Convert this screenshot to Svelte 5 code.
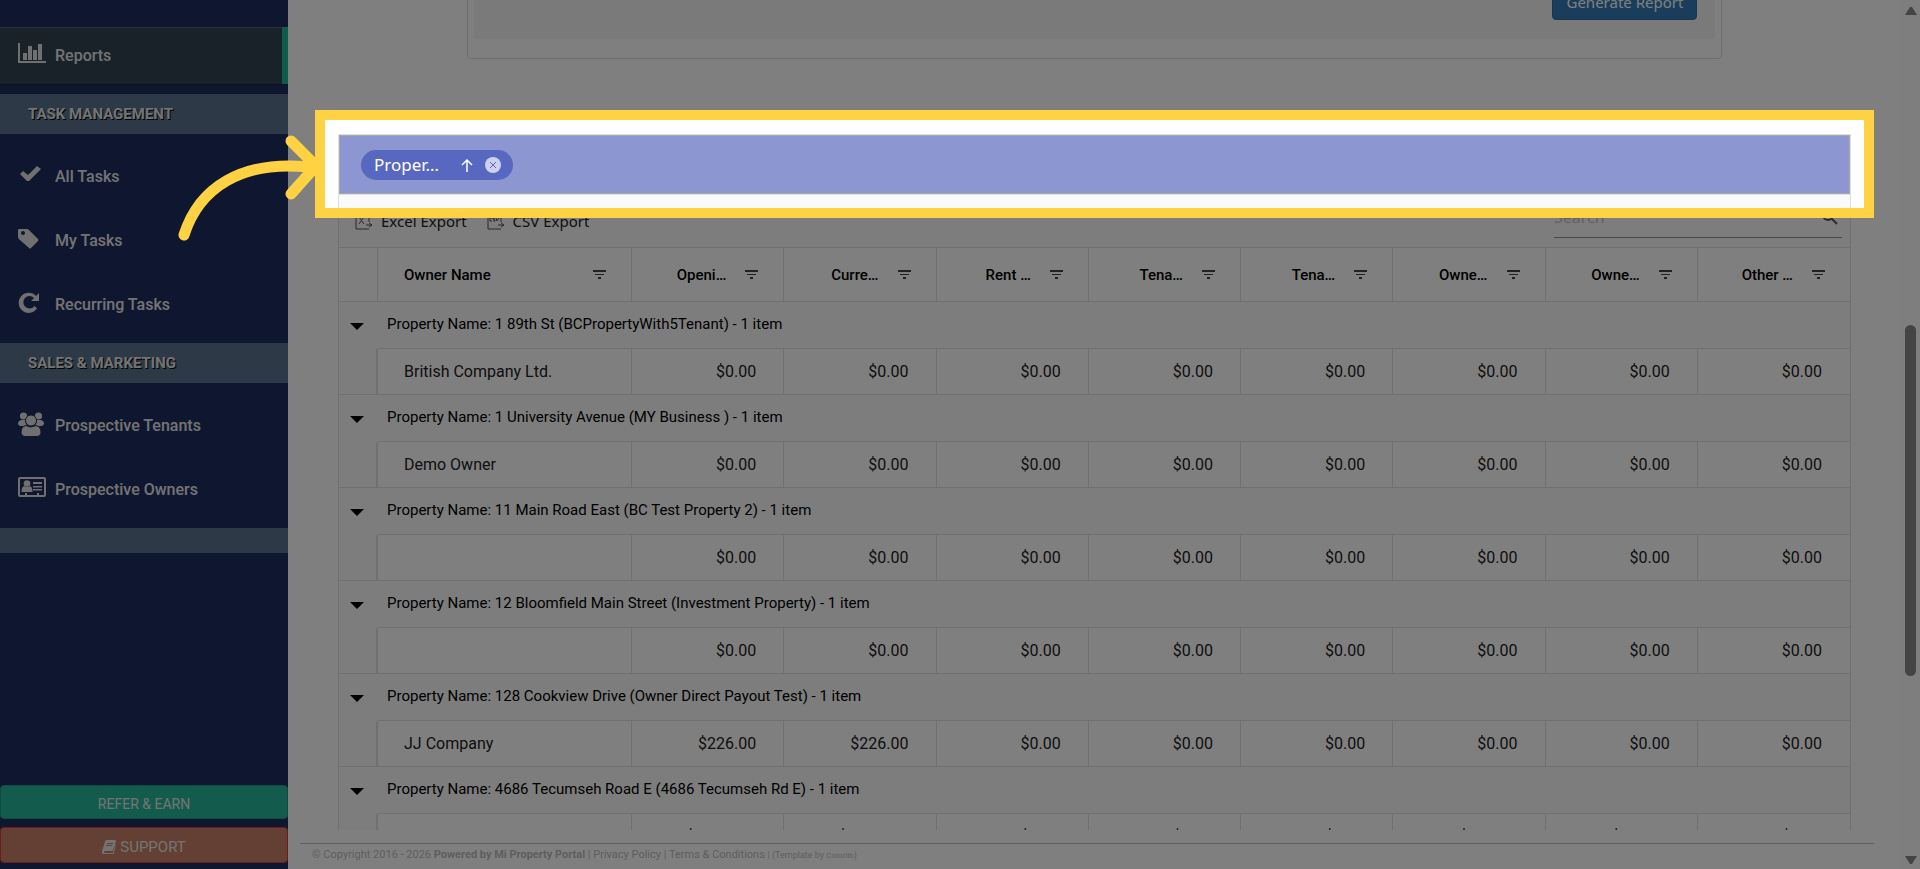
<script lang="ts">
  const tasks = [
    { label: 'All Tasks', icon: 'check' },
    { label: 'My Tasks', icon: 'tag' },
    { label: 'Recurring Tasks', icon: 'repeat' }
  ];
  const sales = [
    { label: 'Prospective Tenants', icon: 'group' },
    { label: 'Prospective Owners', icon: 'card' }
  ];
  const sections = [
    { title: 'Task Management', items: tasks },
    { title: 'Sales & Marketing', items: sales }
  ];

  const columns = ['Openi…', 'Curre…', 'Rent …', 'Tena…', 'Tena…', 'Owne…', 'Owne…', 'Other …'];
  const zero = '$0.00';
  const zeros = Array(8).fill(zero);

  const groups = [
    { name: '1 89th St (BCPropertyWith5Tenant)', owner: 'British Company Ltd.', values: zeros },
    { name: '1 University Avenue (MY Business )', owner: 'Demo Owner', values: zeros },
    { name: '11 Main Road East (BC Test Property 2)', owner: '', values: zeros },
    { name: '12 Bloomfield Main Street (Investment Property)', owner: '', values: zeros },
    { name: '128 Cookview Drive (Owner Direct Payout Test)', owner: 'JJ Company', values: ['$226.00', '$226.00', ...Array(6).fill(zero)] },
    { name: '4686 Tecumseh Road E (4686 Tecumseh Rd E)', owner: '', values: ['$1,226.00', '$1,226.00', zero, zero, zero, '$226.00', '$226.00', zero] }
  ];
</script>

{#snippet navIcon(name: string)}
  <svg class="nav-icon" viewBox="0 0 28 24" aria-hidden="true">
    {#if name === 'chart'}
      <path d="M0 1h2v18h26v2H0z M5 11h4v7H5z M10 4h4v14h-4z M15 8h4v10h-4z M20 2h4v16h-4z" />
    {:else if name === 'check'}
      <path d="M2 11l3-3 5 4 9-9 4 3-12 12h-2z" />
    {:else if name === 'tag'}
      <path fill-rule="evenodd" d="M1 2h8q1 0 2 1l9 9q1 1 0 2l-7 7q-1 1-2 0L2 13q-2-1-2-3V3q0-1 1-1z M5 4a2 2 0 1 0 0 4a2 2 0 1 0 0-4z" />
    {:else if name === 'repeat'}
      <path d="M18 5l3-3v8h-8l3-3a6.200 6.200 0 1 0 .500 8l2.500 2.500A10 10 0 1 1 18 5z" />
    {:else if name === 'group'}
      <circle cx="5.500" cy="4" r="3.600" />
      <circle cx="20.500" cy="4" r="3.600" />
      <path d="M3 8h4q0 4 3 6H3q-3 0-3-3 0-2 3-3z M23 8h-4q0 4-3 6h7q3 0 3-3 0-2-3-3z" />
      <g class="front">
        <circle cx="13" cy="8.500" r="5.500" />
        <path d="M8 13.500q5 3 10 0 5 1 5 7 0 4-4 4H7q-4 0-4-4 0-6 5-7z" />
      </g>
    {:else}
      <path fill-rule="evenodd" d="M2 1h24q2 0 2 2v16q0 2-2 2H2q-2 0-2-2V3q0-2 2-2z M2 3v16h5v-2h2v2h10v-2h2v2h5V3z" />
      <circle cx="9" cy="7.500" r="3.300" />
      <path d="M6 10q3 2 6 0 2.500 1 2.500 6h-11q0-5 2.500-6z M15 6h9v2h-9z M15 10h9v1.500h-9z M15 13h9v1.500h-9z" />
    {/if}
  </svg>
{/snippet}

{#snippet filterIcon()}
  <button class="filter" aria-label="Filter">
    <svg width="13" height="10" viewBox="0 0 13 10"><path d="M0 0h13v2H0z M2 4h9v1H2z M5 7h3v2H5z" /></svg>
  </button>
{/snippet}

<div class="shell">
  <nav class="sidebar">
    <a class="item active" href="#reports">{@render navIcon('chart')}Reports</a>
    {#each sections as section}
      <h3>{section.title}</h3>
      <div class="menu">
        {#each section.items as item}
          <a class="item" href="#menu">{@render navIcon(item.icon)}{item.label}</a>
        {/each}
      </div>
    {/each}
    <div class="band"></div>
    <div class="actions">
      <button class="refer">REFER &amp; EARN</button>
      <button class="support">
        <svg width="14" height="14" viewBox="0 0 14 14" aria-hidden="true">
          <path fill-rule="evenodd" d="M5 0h8q1 0 1 1l-3 9q0 1-1 1H3q-1 0-1 1t1 1h8l2-8 1-1-2 9q0 1-1 1H2q-3 0-2-3L3 2q0-2 2-2z M5 3v1h6V3z M4 5v1h6V5z" />
        </svg>
        SUPPORT
      </button>
    </div>
  </nav>

  <main>
    <section class="criteria">
      <div class="panel">
        <div class="well">
          <button class="generate">Generate Report</button>
        </div>
      </div>
    </section>

    <section class="report">
      <div class="grid">
        <div class="group-area">
          <div class="chip">
            <span>Proper…</span>
            <svg width="12" height="14" viewBox="0 0 12 14" aria-hidden="true"><path d="M6 14V2M1 7l5-5 5 5" /></svg>
            <button aria-label="Ungroup">
              <svg width="16" height="16" viewBox="0 0 16 16"><circle cx="8" cy="8" r="8" /><path d="M5 5l6 6M11 5l-6 6" /></svg>
            </button>
          </div>
        </div>
        <div class="toolbar">
          <button>
            <svg width="18" height="18" viewBox="0 0 18 18" aria-hidden="true"><path d="M14 10V1H1v16h13M11 13h6M14 11l3 2-3 2M4 5l5 7M9 5l-5 7" /></svg>
            Excel Export
          </button>
          <button>
            <svg width="18" height="18" viewBox="0 0 18 18" aria-hidden="true"><path d="M14 10V1H1v16h13M11 13h6M14 11l3 2-3 2M5 6H3v3h2M8 6H6v1l2 1v1H6M9 6l1 3 2-3" /></svg>
            CSV Export
          </button>
          <div class="search">
            <input type="text" placeholder="Search" aria-label="Search" />
            <svg width="16" height="16" viewBox="0 0 16 16" aria-hidden="true"><circle cx="6" cy="6" r="5" /><path d="M10 10l5 5" /></svg>
          </div>
        </div>
        <table>
          <colgroup>
            <col class="indent" />
            <col class="owner" />
            {#each columns as _}<col />{/each}
          </colgroup>
          <thead>
            <tr>
              <th aria-label="Group"></th>
              <th><div class="head first"><span>Owner Name</span>{@render filterIcon()}</div></th>
              {#each columns as column}
                <th><div class="head"><span>{column}</span>{@render filterIcon()}</div></th>
              {/each}
            </tr>
          </thead>
          <tbody>
            {#each groups as group}
              <tr class="caption">
                <td class="toggle">
                  <button aria-label="Collapse group"><svg width="14" height="7" viewBox="0 0 14 7"><path d="M0 0h14L7 7z" /></svg></button>
                </td>
                <td colspan="9">Property Name: {group.name} - 1 item</td>
              </tr>
              <tr class="record">
                <td></td>
                <td class="name">{group.owner}</td>
                {#each group.values as value}
                  <td>{value}</td>
                {/each}
              </tr>
            {/each}
          </tbody>
        </table>
      </div>

      <div class="spotlight">
        <svg class="arrow" width="144" height="112" viewBox="0 0 144 112" aria-hidden="true">
          <path d="M13 77C28 30 70 2 138 9M120 -17L145 8L120 36" />
        </svg>
      </div>
    </section>

    <footer>
      © Copyright 2016 - 2026 <b>Powered by Mi Property Portal</b> | <a href="#privacy">Privacy Policy</a> | <a href="#terms">Terms &amp; Conditions</a>
      <small>| (Template by <a class="credit" href="#template">Colorlib</a>)</small>
    </footer>
  </main>

  <div class="scrollbar" aria-hidden="true">
    <svg width="12" height="10" viewBox="0 0 12 10"><path d="M5 1h2l5 8H0z" /></svg>
    <div class="track"><div class="thumb"></div></div>
    <svg width="12" height="10" viewBox="0 0 12 10"><path d="M5 9h2l5-8H0z" /></svg>
  </div>
</div>

<style>
  :global(body) { margin: 0; }
  .shell {
    display: flex; height: 100vh; overflow: hidden; background: #fff;
    font-family: Roboto, "Liberation Sans", sans-serif; font-size: 16px; color: #212121;
  }
  .shell * { box-sizing: border-box; }
  button { font-family: inherit; cursor: pointer; }
  a { color: inherit; text-decoration: none; }

  /* sidebar */
  .sidebar {
    width: 288px; flex: none; display: flex; flex-direction: column;
    padding: 27px 0 6px; background: #1f2d5e; color: #e7e7e7;
  }
  .item {
    display: flex; align-items: center; gap: 9px; height: 57px; padding: 0 18px;
    font-weight: 500; color: #e7e7e7; flex: none;
  }
  .item.active {
    background: #324452; border-right: 6px solid #1abb9c; margin-bottom: 10px;
    box-shadow: 0 1px 0 rgba(0,0,0,.25), inset 0 1px 0 rgba(255,255,255,.16);
  }
  .nav-icon { width: 28px; height: 24px; margin-bottom: 4px; fill: #e0e0e0; overflow: visible; }
  .front { stroke: #1f2d5e; stroke-width: 1; }
  h3 {
    margin: 0; height: 40px; line-height: 40px; padding-left: 28px; flex: none;
    background: #5a728c; font-size: 15px; font-weight: 700;
    text-transform: uppercase; text-shadow: 1px 1px #000;
  }
  .menu { display: flex; flex-direction: column; gap: 7px; padding: 14px 0 10px; }
  .band { height: 25px; flex: none; background: #5a728c; }
  .actions { margin-top: auto; display: flex; flex-direction: column; gap: 8px; }
  .actions button { padding-top: 4px; border-radius: 4px; color: #e7e7e7; }
  .refer { height: 34px; border: 1px solid #169f85; background: #26b99a; font-size: 14px; }
  .support {
    height: 36px; border: 1px solid #d43f3a; background: #c87f68; font-size: 15px;
    display: flex; align-items: center; justify-content: center; gap: 4px;
  }
  .support svg { fill: #e7e7e7; }

  /* main column */
  main {
    flex: 1; min-width: 0; display: flex; flex-direction: column;
    position: relative; z-index: 1;
  }
  .criteria {
    height: 59px; flex: none; margin: 0 50px; overflow: hidden;
    display: flex; align-items: flex-end; justify-content: center;
  }
  .panel {
    width: 83%; padding: 6px 6px 19px; border: 1px solid #ddd; border-radius: 4px;
  }
  .well {
    display: flex; justify-content: flex-end; padding: 20px 18px 19px;
    background: #f5f5f5; border-radius: 4px;
  }
  .generate {
    height: 36px; padding: 0 13px; border: 1px solid #2e6da4; border-radius: 4px;
    background: #337ab7; color: #fff; font-family: "Noto Sans", sans-serif; font-size: 15px;
  }
  .report {
    flex: 1; min-height: 0; margin: 75px 50px 13px; position: relative;
  }
  .grid { height: 100%; overflow: hidden; border: solid #e0e0e0; border-width: 1px 1px 0; }
  .group-area {
    height: 59px; padding: 0 21px; display: flex; align-items: center;
    background: #8c97d2; border: 1px solid #a9a9a9;
  }
  .chip {
    height: 30px; padding: 0 12px 0 13px; border-radius: 15px; background: #5867bf; color: #fff;
    display: flex; align-items: center; font-family: "Noto Sans", sans-serif; font-size: 17px;
  }
  .chip span { width: 68px; }
  .chip > svg { margin: 0 12px 0 19px; fill: none; stroke: #fff; stroke-width: 1.500; }
  .chip button { display: flex; padding: 0; border: 0; background: none; }
  .chip button circle { fill: #cdd1ec; }
  .chip button path { stroke: #5867bf; stroke-width: 1; }
  .toolbar {
    height: 54px; padding: 0 8px 0 16px; display: flex; align-items: center; gap: 20px;
    background: #fafafa; border: solid #e0e0e0; border-width: 1px 0;
  }
  .toolbar button {
    display: flex; align-items: center; gap: 8px; padding: 0; border: 0; background: none;
    font-family: "Noto Sans", sans-serif; font-size: 15px; color: #212121;
  }
  .toolbar button svg { fill: none; stroke: #555; stroke-width: 1; }
  .search {
    width: 288px; height: 34px; margin-left: auto; padding: 0 4px 8px 0;
    display: flex; align-items: center; border-bottom: 1px solid #949494;
  }
  .search input {
    flex: 1; min-width: 0; padding: 0; border: 0; background: none;
    font-family: "Noto Sans", sans-serif; font-size: 16px;
  }
  .search input::placeholder { color: #c4c4c4; }
  .search svg { fill: none; stroke: #555; stroke-width: 2; }

  table { width: 100%; table-layout: fixed; border-collapse: separate; border-spacing: 0; }
  .indent { width: 39px; }
  .owner { width: 254px; }
  th {
    height: 54px; padding: 0; border: solid #e0e0e0; border-width: 0 1px 1px 0;
    font-size: 15px; font-weight: 500; color: #000;
  }
  th:last-child, .record td:last-child { border-right: 0; }
  .head { display: flex; align-items: center; justify-content: flex-end; gap: 19px; padding-right: 25px; }
  .head.first { justify-content: space-between; padding-left: 26px; }
  .filter { display: flex; padding: 0; border: 0; background: none; }
  .filter svg { fill: #444; }
  td { padding: 0; }
  .caption td {
    height: 47px; padding: 0 0 2px 9px; background: #fafafa; color: #000;
    font-size: 15px; border-bottom: 1px solid #e0e0e0;
  }
  .caption .toggle { padding: 0 4px 2px 0; border-bottom: 0; text-align: center; }
  .toggle button { padding: 0; border: 0; background: none; line-height: 0; }
  .record td {
    height: 46px; padding-right: 27px; text-align: right;
    border: solid #e0e0e0; border-width: 0 1px 1px 0;
  }
  .record td:last-child { padding-right: 28px; }
  .record td:first-child { padding: 0; border-right-width: 2px; background: #fafafa; }
  .record .name { padding-left: 26px; text-align: left; }

  footer {
    margin: 0 27px 0 12px; padding: 0 12px; height: 26px; line-height: 22px; flex: none;
    border-top: 1px solid #bebebe; font-size: 11px; color: #bcbcbc; white-space: nowrap;
  }
  small { font-size: 9px; }
  .credit { font-size: 8px; }

  /* guided tour highlight */
  .spotlight {
    position: absolute; top: -24px; left: -23px; right: -23px; height: 108px;
    border: 10px solid #ffd243; box-shadow: 0 0 0 2400px rgba(0,0,0,.5); pointer-events: none;
  }
  .arrow { position: absolute; top: 38px; left: -154px; overflow: visible; }
  .arrow path { fill: none; stroke: #ffd243; stroke-width: 11; stroke-linecap: round; }

  .scrollbar {
    width: 19px; flex: none; padding: 6px 0 4px; background: #fcfcfc;
    display: flex; flex-direction: column; align-items: center;
  }
  .scrollbar svg { fill: #888; }
  .track { flex: 1; width: 11px; display: flex; flex-direction: column; }
  .track::before { content: ""; flex: 309; }
  .track::after { content: ""; flex: 179; }
  .thumb { flex: 351; border-radius: 6px; background: #888; }
</style>
